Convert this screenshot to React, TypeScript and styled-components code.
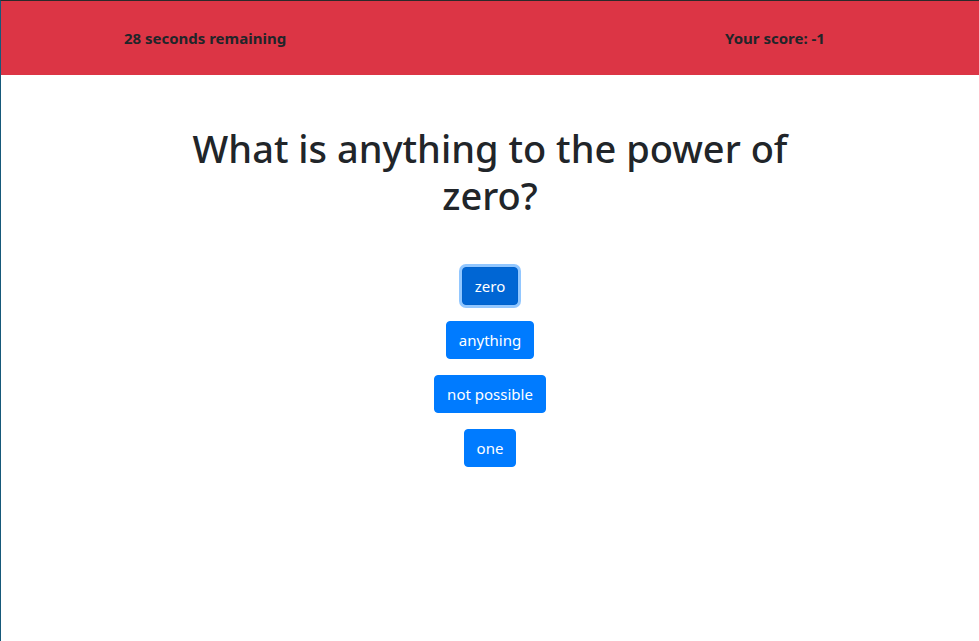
import React from "react";
import styled, { createGlobalStyle } from "styled-components";

const Global = createGlobalStyle`
  html, body { margin: 0; padding: 0; background: #fff; }
  body {
    font-family: "Noto Sans", "Open Sans", sans-serif;
    color: #212529;
  }
  #root { min-height: 100vh; }
`;

const Frame = styled.div`
  min-height: 100vh;
  box-sizing: border-box;
  border-top: 1px solid #2a2a2a;
  border-left: 1px solid #16597a;
  display: flex;
  flex-direction: column;
`;

const Header = styled.header`
  background: #dc3545;
  height: 74px;
  display: grid;
  grid-template-columns: 1fr 1fr;
  column-gap: 162px;
  align-items: center;
`;

const Stat = styled.div`
  text-align: center;
  font-weight: 700;
  font-size: 15px;
  color: #212529;
`;

const Main = styled.main`
  display: flex;
  flex-direction: column;
  align-items: center;
  padding-top: 50px;
`;

const Question = styled.h1`
  margin: 0 0 48px;
  max-width: 640px;
  text-align: center;
  font-size: 38px;
  font-weight: 500;
  line-height: 47px;
  color: #212529;
`;

const Answers = styled.div`
  display: flex;
  flex-direction: column;
  align-items: center;
  gap: 16px;
`;

const AnswerButton = styled.button<{ $active?: boolean }>`
  font-family: "Noto Sans", "Open Sans", sans-serif;
  font-size: 15px;
  line-height: 24px;
  height: 38px;
  padding: 6px 12px;
  border-radius: 4px;
  border: 1px solid ${(p) => (p.$active ? "#0062cc" : "#007bff")};
  background: ${(p) => (p.$active ? "#0066d4" : "#007bff")};
  color: #fff;
  cursor: pointer;
  box-shadow: ${(p) => (p.$active ? "0 0 0 3px rgba(38, 143, 255, 0.5)" : "none")};
`;

const answers = ["zero", "anything", "not possible", "one"];

export default function App() {
  return (
    <>
      <Global />
      <Frame>
        <Header>
          <Stat>28 seconds remaining</Stat>
          <Stat>Your score: -1</Stat>
        </Header>
        <Main>
          <Question>What is anything to the power of zero?</Question>
          <Answers>
            {answers.map((a, i) => (
              <AnswerButton key={a} $active={i === 0}>
                {a}
              </AnswerButton>
            ))}
          </Answers>
        </Main>
      </Frame>
    </>
  );
}
